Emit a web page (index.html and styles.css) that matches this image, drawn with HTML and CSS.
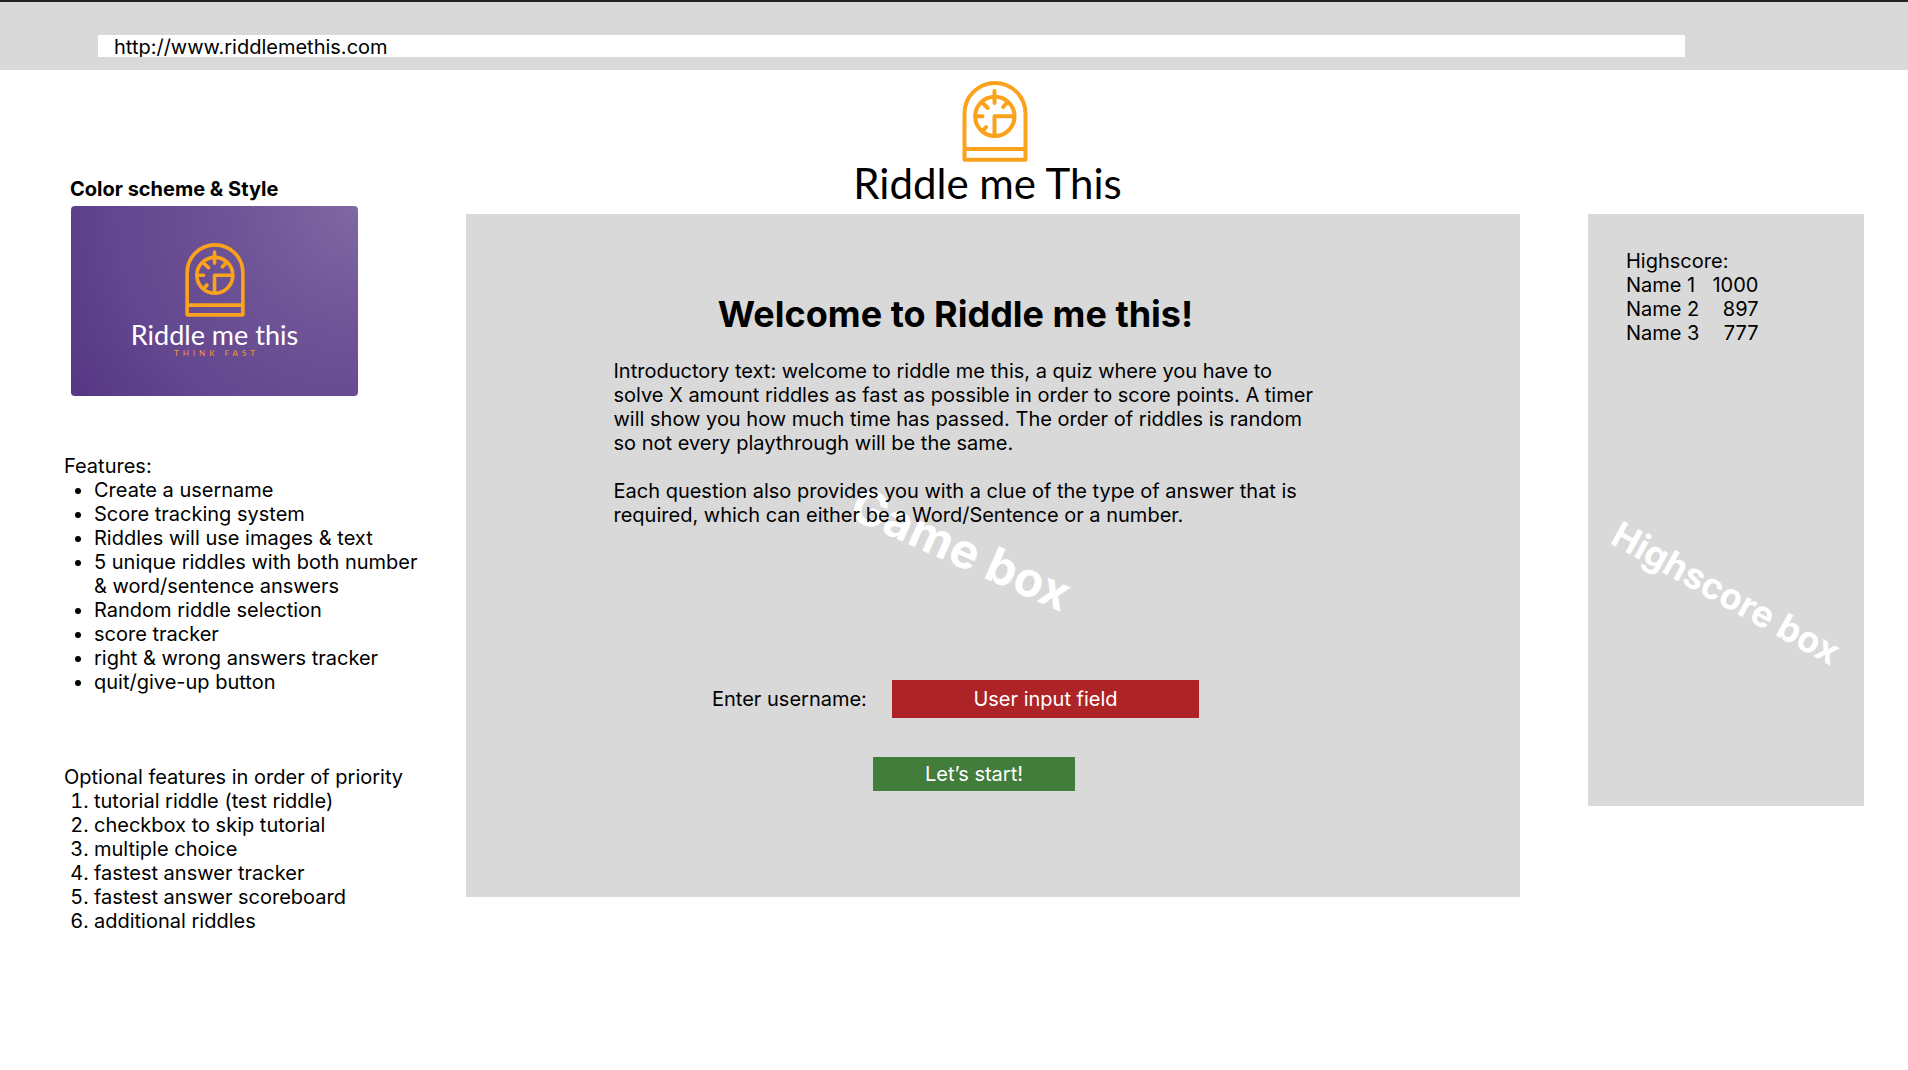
FILE: index.html
```html
<!DOCTYPE html>
<html lang="en">
<head>
<meta charset="utf-8">
<title>Riddle me This</title>
<link rel="stylesheet" href="styles.css">
</head>
<body>
<svg class="symbols" aria-hidden="true">
  <symbol id="dial" viewBox="0 0 195 243">
    <g fill="none" stroke="#faa21b" stroke-width="12" stroke-linecap="round" stroke-linejoin="round">
      <path d="M6 236V97.500A91.500 91.500 0 0 1 189 97.500V236ZM6 204H189"/>
      <circle cx="97" cy="106" r="59"/>
      <path d="M96 30V66M134 65L122 78M59 65L76 81M41 106H60M61 149L71 138M96 162V106H153"/>
    </g>
  </symbol>
</svg>
<header class="browser-bar">
  <input class="address" type="text" aria-label="Address" value="http://www.riddlemethis.com">
</header>
<div class="page">
  <aside class="notes">
    <h2 class="notes-title">Color scheme &amp; Style</h2>
    <div class="brand-card">
      <svg class="card-icon" aria-hidden="true"><use href="#dial"/></svg>
      <span class="card-name">Riddle me this</span>
      <span class="card-tag">THINK FAST</span>
    </div>
    <section class="features">
      <p>Features:</p>
      <ul>
        <li>Create a username</li>
        <li>Score tracking system</li>
        <li>Riddles will use images &amp; text</li>
        <li>5 unique riddles with both number &amp; word/sentence answers</li>
        <li>Random riddle selection</li>
        <li>score tracker</li>
        <li>right &amp; wrong answers tracker</li>
        <li>quit/give-up button</li>
      </ul>
    </section>
    <section class="features">
      <p>Optional features in order of priority</p>
      <ol>
        <li>tutorial riddle (test riddle)</li>
        <li>checkbox to skip tutorial</li>
        <li>multiple choice</li>
        <li>fastest answer tracker</li>
        <li>fastest answer scoreboard</li>
        <li>additional riddles</li>
      </ol>
    </section>
  </aside>
  <main class="game">
    <div class="logo">
      <svg class="logo-icon" aria-hidden="true"><use href="#dial"/></svg>
      <span class="logo-name">Riddle me This</span>
    </div>
    <div class="game-box">
      <span class="watermark game-mark">Game box</span>
      <div class="game-content">
        <h1>Welcome to Riddle me this!</h1>
        <div class="intro">
          <p>Introductory text: welcome to riddle me this, a quiz where you have to solve X amount riddles as fast as possible in order to score points. A timer will show you how much time has passed. The order of riddles is random so not every playthrough will be the same.</p>
          <p>Each question also provides you with a clue of the type of answer that is required, which can either be a Word/Sentence or a number.</p>
        </div>
        <form class="start-form">
          <label for="username">Enter username:</label>
          <input id="username" type="text" placeholder="User input field">
          <button type="button">Let’s start!</button>
        </form>
      </div>
    </div>
  </main>
  <aside class="scores">
    <div class="score-box">
      <span class="watermark score-mark">Highscore box</span>
      <table>
        <caption>Highscore:</caption>
        <tbody>
          <tr><td>Name 1</td><td class="points">1000</td></tr>
          <tr><td>Name 2</td><td class="points">897</td></tr>
          <tr><td>Name 3</td><td class="points">777</td></tr>
        </tbody>
      </table>
    </div>
  </aside>
</div>
</body>
</html>
```
FILE: styles.css
```css
* { box-sizing: border-box; }

body {
  margin: 0;
  background: #fff;
  color: #000;
  font: 20px/24px Inter, sans-serif;
}

h1, h2, p, ul, ol { margin: 0; }

input, button { font: inherit; border: 0; border-radius: 0; }

.symbols { display: none; }

.browser-bar {
  height: 70px;
  padding: 33px 223px 0 98px;
  border-top: 2px solid #262324;
  background: #d9d9d9;
}

.address {
  display: block;
  width: 100%;
  height: 22px;
  padding: 2px 16px 0;
  background: #fff;
  color: #000;
}

.page {
  display: grid;
  grid-template-columns: 402fr 1054fr 344fr;
  padding: 0 44px 48px 64px;
}

/* Left column */
.notes { padding-top: 107px; }

.notes-title {
  padding-left: 6px;
  font-size: 20px;
  line-height: 24px;
}

.brand-card {
  display: flex;
  flex-direction: column;
  align-items: center;
  width: 287px;
  height: 190px;
  margin: 5px 0 0 7px;
  padding-top: 37px;
  border-radius: 4px;
  background: radial-gradient(circle at 100% 0, #8068a3 0, #6f5497 35%, #63478f 70%, #553684 100%);
}

.card-icon { width: 60px; height: 74px; }

.card-name {
  margin-top: 4px;
  color: #fff;
  font: 27px/28px Lato, sans-serif;
}

.card-tag {
  padding-left: 4px;
  color: #f39a22;
  font: 8px/8px Lato, sans-serif;
  letter-spacing: 4px;
}

.features {
  max-width: 360px;
  margin-top: 58px;
}

.features + .features { margin-top: 71px; }
.features ul, .features ol { padding-left: 30px; }

/* Centre column */
.logo {
  display: flex;
  flex-direction: column;
  align-items: center;
  height: 144px;
  padding: 11px 0 0 4px;
}

.logo-icon { width: 66px; height: 81px; }

.logo-name {
  padding-right: 15px;
  font: 42px/42px Lato, sans-serif;
}

.game-box {
  position: relative;
  min-height: 683px;
  padding: 78px 75px 106px 0;
  background: #d9d9d9;
}

.game-content {
  position: relative;
  max-width: 720px;
  margin: 0 auto;
}

h1 {
  font-size: 36px;
  line-height: 44px;
  text-align: center;
}

.intro {
  display: grid;
  gap: 24px;
  margin-top: 23px;
  padding-left: 18px;
}

.start-form {
  display: grid;
  grid-template-columns: 180px 307px;
  justify-content: center;
  align-items: center;
  gap: 39px 0;
  margin-top: 153px;
}

.start-form input {
  width: 100%;
  height: 38px;
  background: #ae2426;
  color: #fff;
  text-align: center;
}

.start-form input::placeholder { color: #fff; opacity: 1; }

.start-form button {
  grid-column: 1 / -1;
  width: 202px;
  height: 34px;
  margin-left: 161px;
  background: #427d3c;
  color: #fff;
}

.watermark {
  position: absolute;
  color: #fff;
  font-weight: 700;
  white-space: nowrap;
}

.game-mark {
  top: 49%;
  left: 47%;
  font-size: 48px;
  line-height: 58px;
  transform: translate(-50%, -50%) rotate(24deg);
}

.score-mark {
  top: 64%;
  left: 50%;
  font-size: 36px;
  line-height: 44px;
  transform: translate(-50%, -50%) rotate(29deg);
}

/* Right column */
.scores { padding: 144px 0 0 68px; }

.score-box {
  position: relative;
  min-height: 592px;
  padding: 35px 38px;
  background: #d9d9d9;
}

table { position: relative; border-collapse: collapse; }
caption { text-align: left; }
td { padding: 0; }
.points { padding-left: 13px; text-align: right; }
```
